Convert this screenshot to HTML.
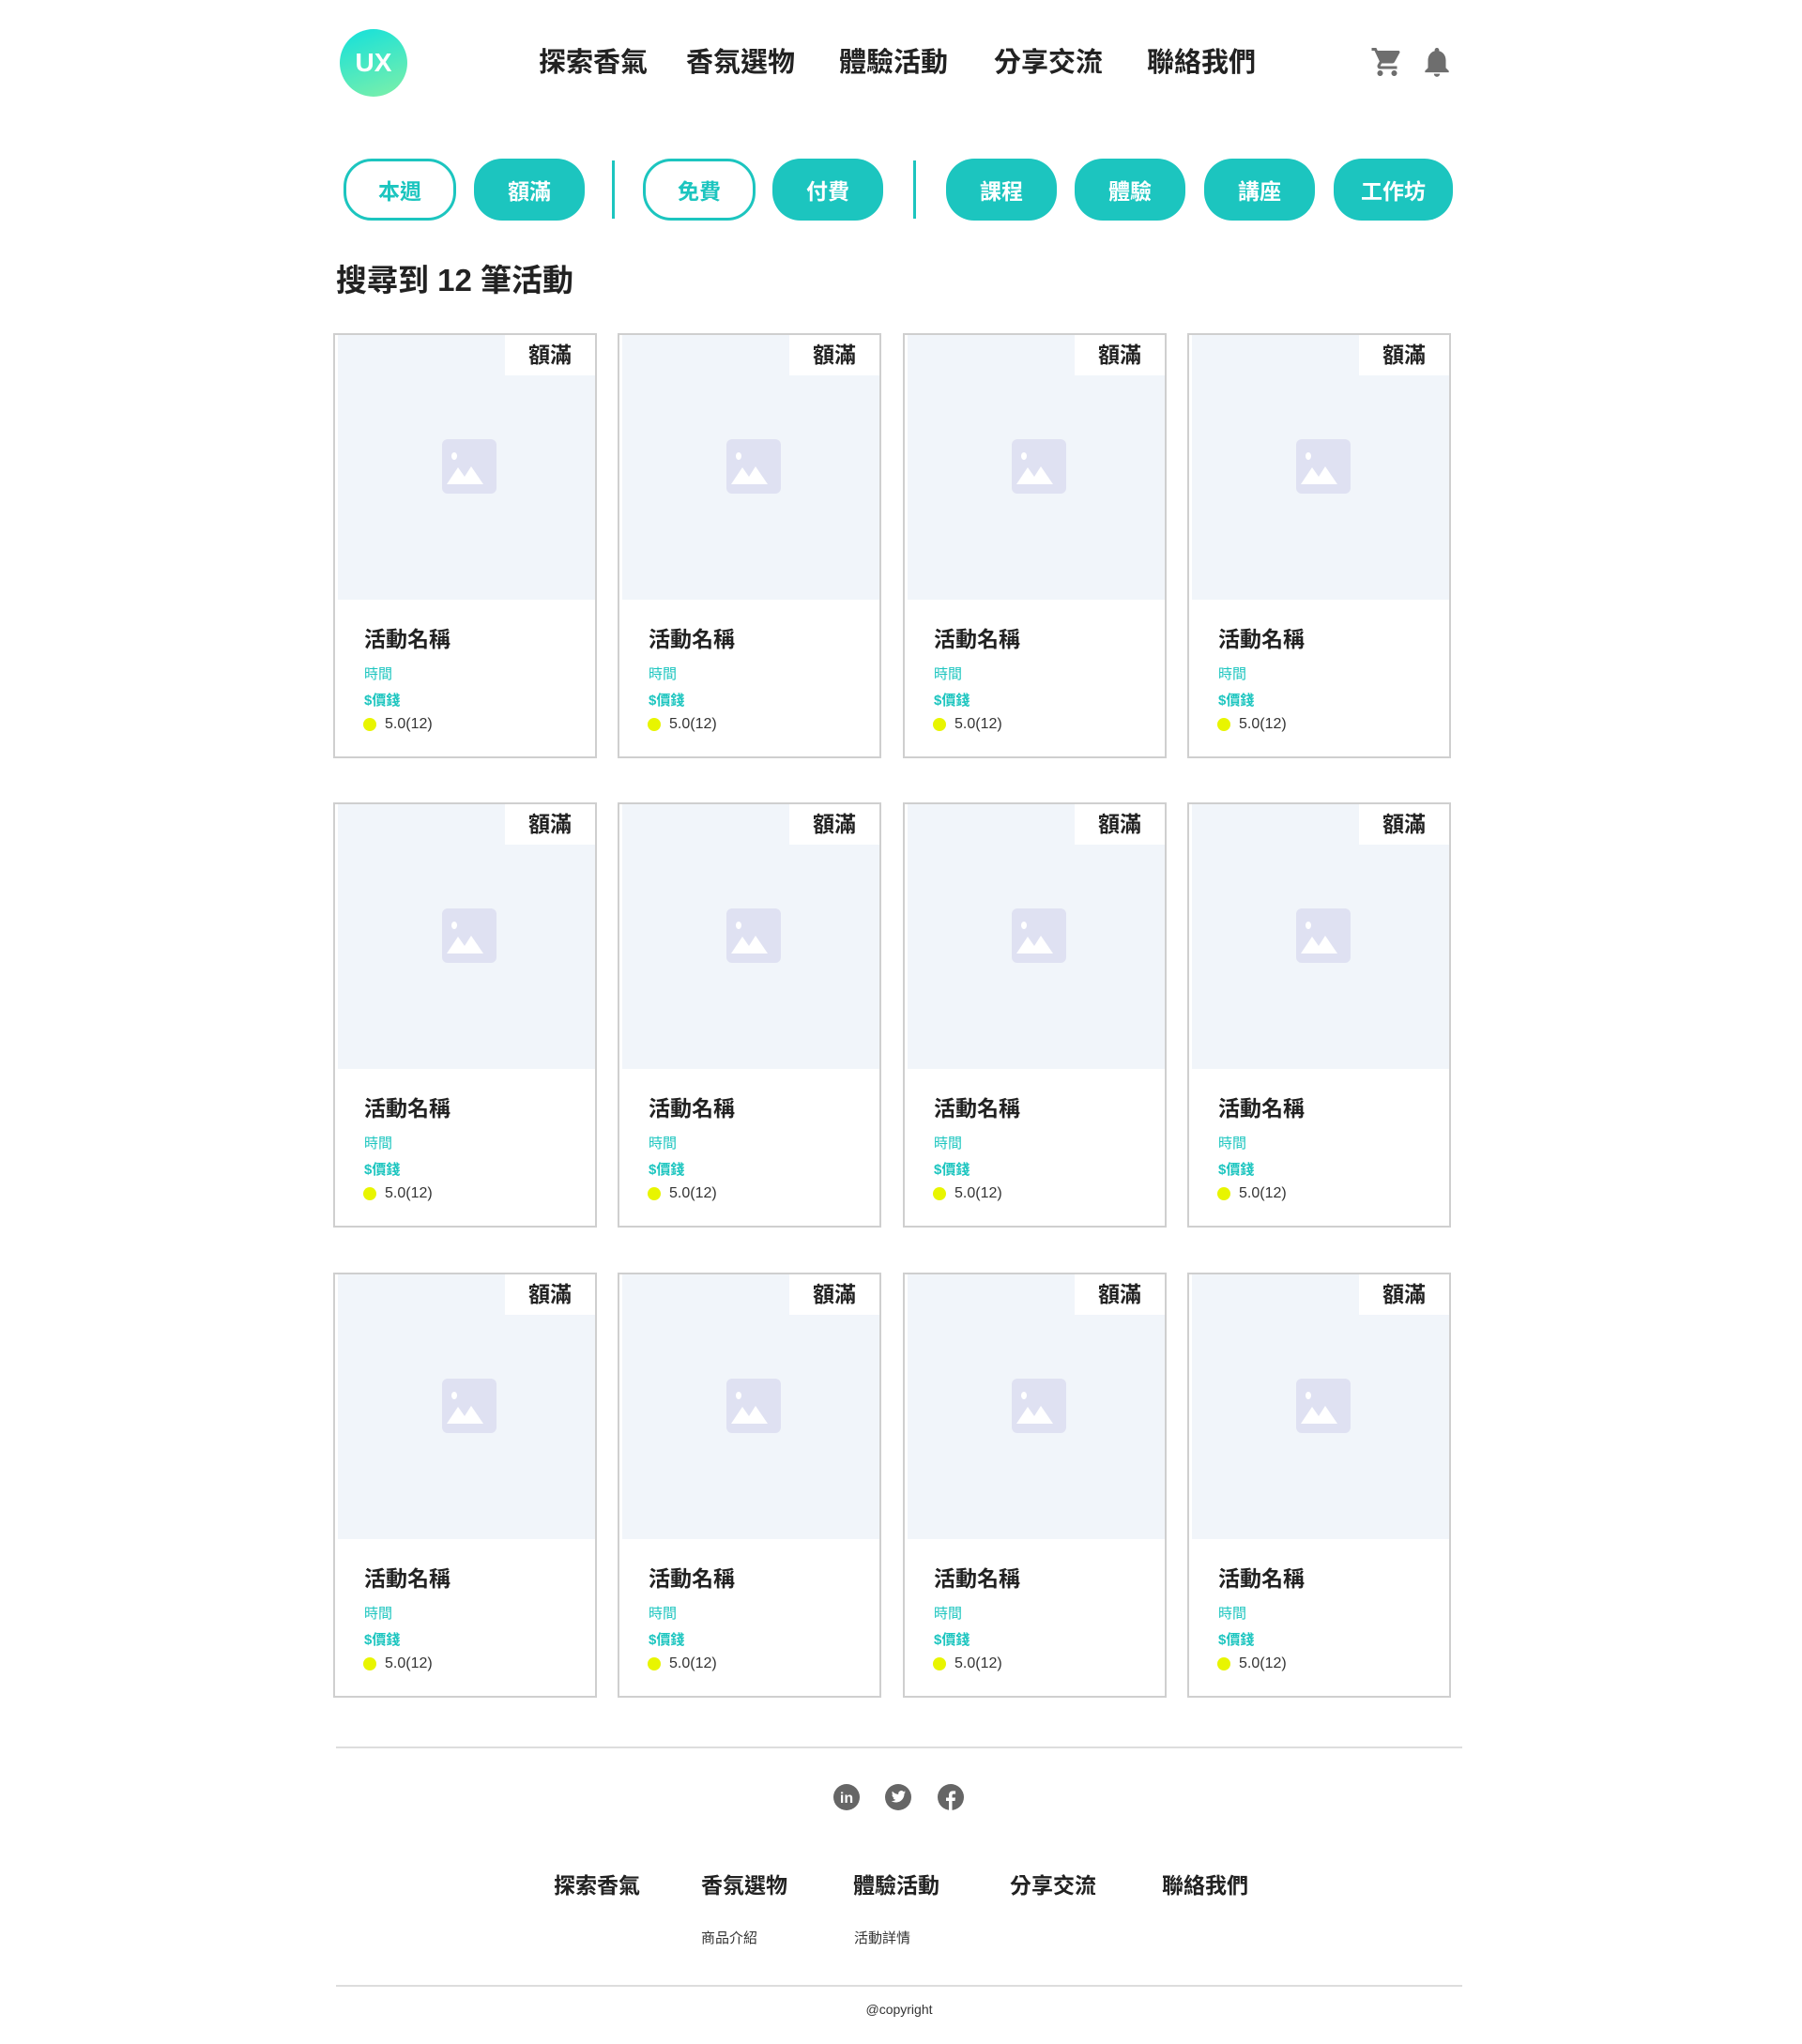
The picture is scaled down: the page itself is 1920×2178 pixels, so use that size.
<!DOCTYPE html>
<html><head><meta charset="utf-8"><style>
*{margin:0;padding:0;box-sizing:border-box}
body{width:1920px;height:2178px;background:#fff;position:relative;font-family:"Liberation Sans","Noto Sans CJK TC",sans-serif;color:#222;overflow:hidden}
.a{position:absolute}
.logo{left:362px;top:31px;width:72px;height:72px;border-radius:50%;background:linear-gradient(160deg,#12e0dc,#7ff0a8);color:#fff;font-weight:bold;font-size:28px;display:flex;align-items:center;justify-content:center}
.nav{top:46px;font-size:29px;font-weight:bold;color:#222;line-height:42px}
.pill{top:169px;height:66px;border-radius:30px;font-size:23px;font-weight:bold;display:flex;align-items:center;justify-content:center;background:#1cc5bf;color:#fff}
.pill.o{background:#fff;color:#1cc5bf;border:3px solid #1cc5bf}
.div{top:171px;width:3px;height:62px;background:#1cc5bf}
.card{position:absolute;width:281px;height:453px;border:2px solid #cfcfcf;background:#fff}
.img{position:absolute;left:3px;top:0;right:0;height:282px;background:#f1f5fa}
.badge{position:absolute;right:0;top:0;width:96px;height:43px;background:#fff;font-size:23px;font-weight:bold;text-align:center;line-height:43px}
.ic{position:absolute;left:111px;top:111px;width:58px;height:58px}
.t{position:absolute;left:31px;top:305px;font-size:23px;font-weight:bold;color:#222}
.s{position:absolute;left:31px;font-size:15px;color:#1cc5bf}
.s1{top:350px}.s2{top:378px;font-weight:bold}
.r{position:absolute;left:30px;top:406px;font-size:16px;color:#333;display:flex;align-items:center}
.r i{width:14px;height:14px;border-radius:50%;background:#e8f500;margin-right:9px}
.fn{top:1990px;font-size:23px;font-weight:bold;color:#222}
.sub{top:2054px;font-size:15px;color:#333}
.line{left:358px;width:1200px;height:2px;background:#ddd}
.c1{left:355px}.c2{left:658px}.c3{left:962px}.c4{left:1265px}
.r1{top:355px}.r2{top:855px}.r3{top:1356px}
</style></head><body>
<div class="a logo">UX</div>
<div class="a nav" style="left:574px">探索香氣</div>
<div class="a nav" style="left:731px">香氛選物</div>
<div class="a nav" style="left:894px">體驗活動</div>
<div class="a nav" style="left:1059px">分享交流</div>
<div class="a nav" style="left:1222px">聯絡我們</div>
<svg class="a" style="left:1460px;top:48px" width="36" height="36" viewBox="0 0 24 24"><path fill="#6e6e6e" d="M7 18c-1.1 0-2 .9-2 2s.9 2 2 2 2-.9 2-2-.9-2-2-2zM1 2v2h2l3.6 7.59-1.35 2.45c-.16.28-.25.61-.25.96 0 1.1.9 2 2 2h12v-2H7.42c-.14 0-.25-.11-.25-.25l.03-.12.9-1.63h7.45c.75 0 1.41-.41 1.75-1.03l3.58-6.49A1 1 0 0 0 20 4H5.21l-.94-2H1zm16 16c-1.1 0-2 .9-2 2s.9 2 2 2 2-.9 2-2-.9-2-2-2z"/></svg>
<svg class="a" style="left:1512px;top:47px" width="38" height="38" viewBox="0 0 24 24"><path fill="#6e6e6e" d="M12 22c1.1 0 2-.9 2-2h-4c0 1.1.9 2 2 2zm6-6v-5c0-3.07-1.63-5.64-4.5-6.32V4c0-.83-.67-1.5-1.5-1.5s-1.5.67-1.5 1.5v.68C7.64 5.36 6 7.92 6 11v5l-2 2v1h16v-1l-2-2z"/></svg>

<div class="a pill o" style="left:366px;width:120px">本週</div>
<div class="a pill" style="left:505px;width:118px">額滿</div>
<div class="a div" style="left:652px"></div>
<div class="a pill o" style="left:685px;width:120px">免費</div>
<div class="a pill" style="left:823px;width:118px">付費</div>
<div class="a div" style="left:973px"></div>
<div class="a pill" style="left:1008px;width:118px">課程</div>
<div class="a pill" style="left:1145px;width:118px">體驗</div>
<div class="a pill" style="left:1283px;width:118px">講座</div>
<div class="a pill" style="left:1421px;width:127px">工作坊</div>

<div class="a" style="left:358px;top:272px;font-size:33px;font-weight:bold;color:#222">搜尋到 12 筆活動</div>

<div class="card c1 r1"><div class="img"><svg class="ic" viewBox="0 0 58 58"><rect width="58" height="58" rx="6" fill="#dfe1f2"/><ellipse cx="13" cy="18" rx="3" ry="4" fill="#fff"/><path d="M5 48 L17 30 L24 40 L31 29 L44 48Z" fill="#fff"/></svg><div class="badge">額滿</div></div><div class="t">活動名稱</div><div class="s s1">時間</div><div class="s s2">$價錢</div><div class="r"><i></i>5.0(12)</div></div>
<div class="card c2 r1"><div class="img"><svg class="ic" viewBox="0 0 58 58"><rect width="58" height="58" rx="6" fill="#dfe1f2"/><ellipse cx="13" cy="18" rx="3" ry="4" fill="#fff"/><path d="M5 48 L17 30 L24 40 L31 29 L44 48Z" fill="#fff"/></svg><div class="badge">額滿</div></div><div class="t">活動名稱</div><div class="s s1">時間</div><div class="s s2">$價錢</div><div class="r"><i></i>5.0(12)</div></div>
<div class="card c3 r1"><div class="img"><svg class="ic" viewBox="0 0 58 58"><rect width="58" height="58" rx="6" fill="#dfe1f2"/><ellipse cx="13" cy="18" rx="3" ry="4" fill="#fff"/><path d="M5 48 L17 30 L24 40 L31 29 L44 48Z" fill="#fff"/></svg><div class="badge">額滿</div></div><div class="t">活動名稱</div><div class="s s1">時間</div><div class="s s2">$價錢</div><div class="r"><i></i>5.0(12)</div></div>
<div class="card c4 r1"><div class="img"><svg class="ic" viewBox="0 0 58 58"><rect width="58" height="58" rx="6" fill="#dfe1f2"/><ellipse cx="13" cy="18" rx="3" ry="4" fill="#fff"/><path d="M5 48 L17 30 L24 40 L31 29 L44 48Z" fill="#fff"/></svg><div class="badge">額滿</div></div><div class="t">活動名稱</div><div class="s s1">時間</div><div class="s s2">$價錢</div><div class="r"><i></i>5.0(12)</div></div>
<div class="card c1 r2"><div class="img"><svg class="ic" viewBox="0 0 58 58"><rect width="58" height="58" rx="6" fill="#dfe1f2"/><ellipse cx="13" cy="18" rx="3" ry="4" fill="#fff"/><path d="M5 48 L17 30 L24 40 L31 29 L44 48Z" fill="#fff"/></svg><div class="badge">額滿</div></div><div class="t">活動名稱</div><div class="s s1">時間</div><div class="s s2">$價錢</div><div class="r"><i></i>5.0(12)</div></div>
<div class="card c2 r2"><div class="img"><svg class="ic" viewBox="0 0 58 58"><rect width="58" height="58" rx="6" fill="#dfe1f2"/><ellipse cx="13" cy="18" rx="3" ry="4" fill="#fff"/><path d="M5 48 L17 30 L24 40 L31 29 L44 48Z" fill="#fff"/></svg><div class="badge">額滿</div></div><div class="t">活動名稱</div><div class="s s1">時間</div><div class="s s2">$價錢</div><div class="r"><i></i>5.0(12)</div></div>
<div class="card c3 r2"><div class="img"><svg class="ic" viewBox="0 0 58 58"><rect width="58" height="58" rx="6" fill="#dfe1f2"/><ellipse cx="13" cy="18" rx="3" ry="4" fill="#fff"/><path d="M5 48 L17 30 L24 40 L31 29 L44 48Z" fill="#fff"/></svg><div class="badge">額滿</div></div><div class="t">活動名稱</div><div class="s s1">時間</div><div class="s s2">$價錢</div><div class="r"><i></i>5.0(12)</div></div>
<div class="card c4 r2"><div class="img"><svg class="ic" viewBox="0 0 58 58"><rect width="58" height="58" rx="6" fill="#dfe1f2"/><ellipse cx="13" cy="18" rx="3" ry="4" fill="#fff"/><path d="M5 48 L17 30 L24 40 L31 29 L44 48Z" fill="#fff"/></svg><div class="badge">額滿</div></div><div class="t">活動名稱</div><div class="s s1">時間</div><div class="s s2">$價錢</div><div class="r"><i></i>5.0(12)</div></div>
<div class="card c1 r3"><div class="img"><svg class="ic" viewBox="0 0 58 58"><rect width="58" height="58" rx="6" fill="#dfe1f2"/><ellipse cx="13" cy="18" rx="3" ry="4" fill="#fff"/><path d="M5 48 L17 30 L24 40 L31 29 L44 48Z" fill="#fff"/></svg><div class="badge">額滿</div></div><div class="t">活動名稱</div><div class="s s1">時間</div><div class="s s2">$價錢</div><div class="r"><i></i>5.0(12)</div></div>
<div class="card c2 r3"><div class="img"><svg class="ic" viewBox="0 0 58 58"><rect width="58" height="58" rx="6" fill="#dfe1f2"/><ellipse cx="13" cy="18" rx="3" ry="4" fill="#fff"/><path d="M5 48 L17 30 L24 40 L31 29 L44 48Z" fill="#fff"/></svg><div class="badge">額滿</div></div><div class="t">活動名稱</div><div class="s s1">時間</div><div class="s s2">$價錢</div><div class="r"><i></i>5.0(12)</div></div>
<div class="card c3 r3"><div class="img"><svg class="ic" viewBox="0 0 58 58"><rect width="58" height="58" rx="6" fill="#dfe1f2"/><ellipse cx="13" cy="18" rx="3" ry="4" fill="#fff"/><path d="M5 48 L17 30 L24 40 L31 29 L44 48Z" fill="#fff"/></svg><div class="badge">額滿</div></div><div class="t">活動名稱</div><div class="s s1">時間</div><div class="s s2">$價錢</div><div class="r"><i></i>5.0(12)</div></div>
<div class="card c4 r3"><div class="img"><svg class="ic" viewBox="0 0 58 58"><rect width="58" height="58" rx="6" fill="#dfe1f2"/><ellipse cx="13" cy="18" rx="3" ry="4" fill="#fff"/><path d="M5 48 L17 30 L24 40 L31 29 L44 48Z" fill="#fff"/></svg><div class="badge">額滿</div></div><div class="t">活動名稱</div><div class="s s1">時間</div><div class="s s2">$價錢</div><div class="r"><i></i>5.0(12)</div></div>

<div class="a line" style="top:1861px"></div>
<svg class="a" style="left:887px;top:1900px" width="140" height="30" viewBox="0 0 140 30">
<circle cx="15" cy="15" r="14" fill="#666"/><text x="15" y="21" font-size="16" font-weight="bold" fill="#fff" text-anchor="middle" font-family="Liberation Sans">in</text>
<circle cx="70" cy="15" r="14" fill="#666"/><path fill="#fff" d="M78 9.5c-.6.3-1.2.4-1.8.5.7-.4 1.1-1 1.4-1.7-.6.4-1.3.6-2 .8a3.1 3.1 0 0 0-5.3 2.8c-2.6-.1-4.9-1.4-6.4-3.2-.8 1.4-.4 3.2.9 4.1-.5 0-1-.2-1.4-.4 0 1.5 1.1 2.8 2.5 3.1-.5.1-.9.2-1.4.1.4 1.2 1.6 2.1 2.9 2.2-1.3 1-3 1.5-4.6 1.3 1.4.9 3.1 1.4 4.8 1.4 5.8 0 9-4.9 8.9-9.4.6-.4 1.1-1 1.5-1.6z"/>
<circle cx="126" cy="15" r="14" fill="#666"/><path fill="#fff" d="M127.5 29v-10h3l.5-3.5h-3.5v-2.2c0-1 .3-1.7 1.8-1.7h1.8V8.5c-.3 0-1.4-.1-2.7-.1-2.7 0-4.4 1.6-4.4 4.6v2.5h-3V19h3v10z"/>
</svg>
<div class="a fn" style="left:590px">探索香氣</div>
<div class="a fn" style="left:747px">香氛選物</div>
<div class="a fn" style="left:909px">體驗活動</div>
<div class="a fn" style="left:1076px">分享交流</div>
<div class="a fn" style="left:1238px">聯絡我們</div>
<div class="a sub" style="left:747px">商品介紹</div>
<div class="a sub" style="left:910px">活動詳情</div>
<div class="a line" style="top:2115px"></div>
<div class="a" style="left:0;width:1916px;text-align:center;top:2133px;font-size:14px;color:#333">@copyright</div>
</body></html>
